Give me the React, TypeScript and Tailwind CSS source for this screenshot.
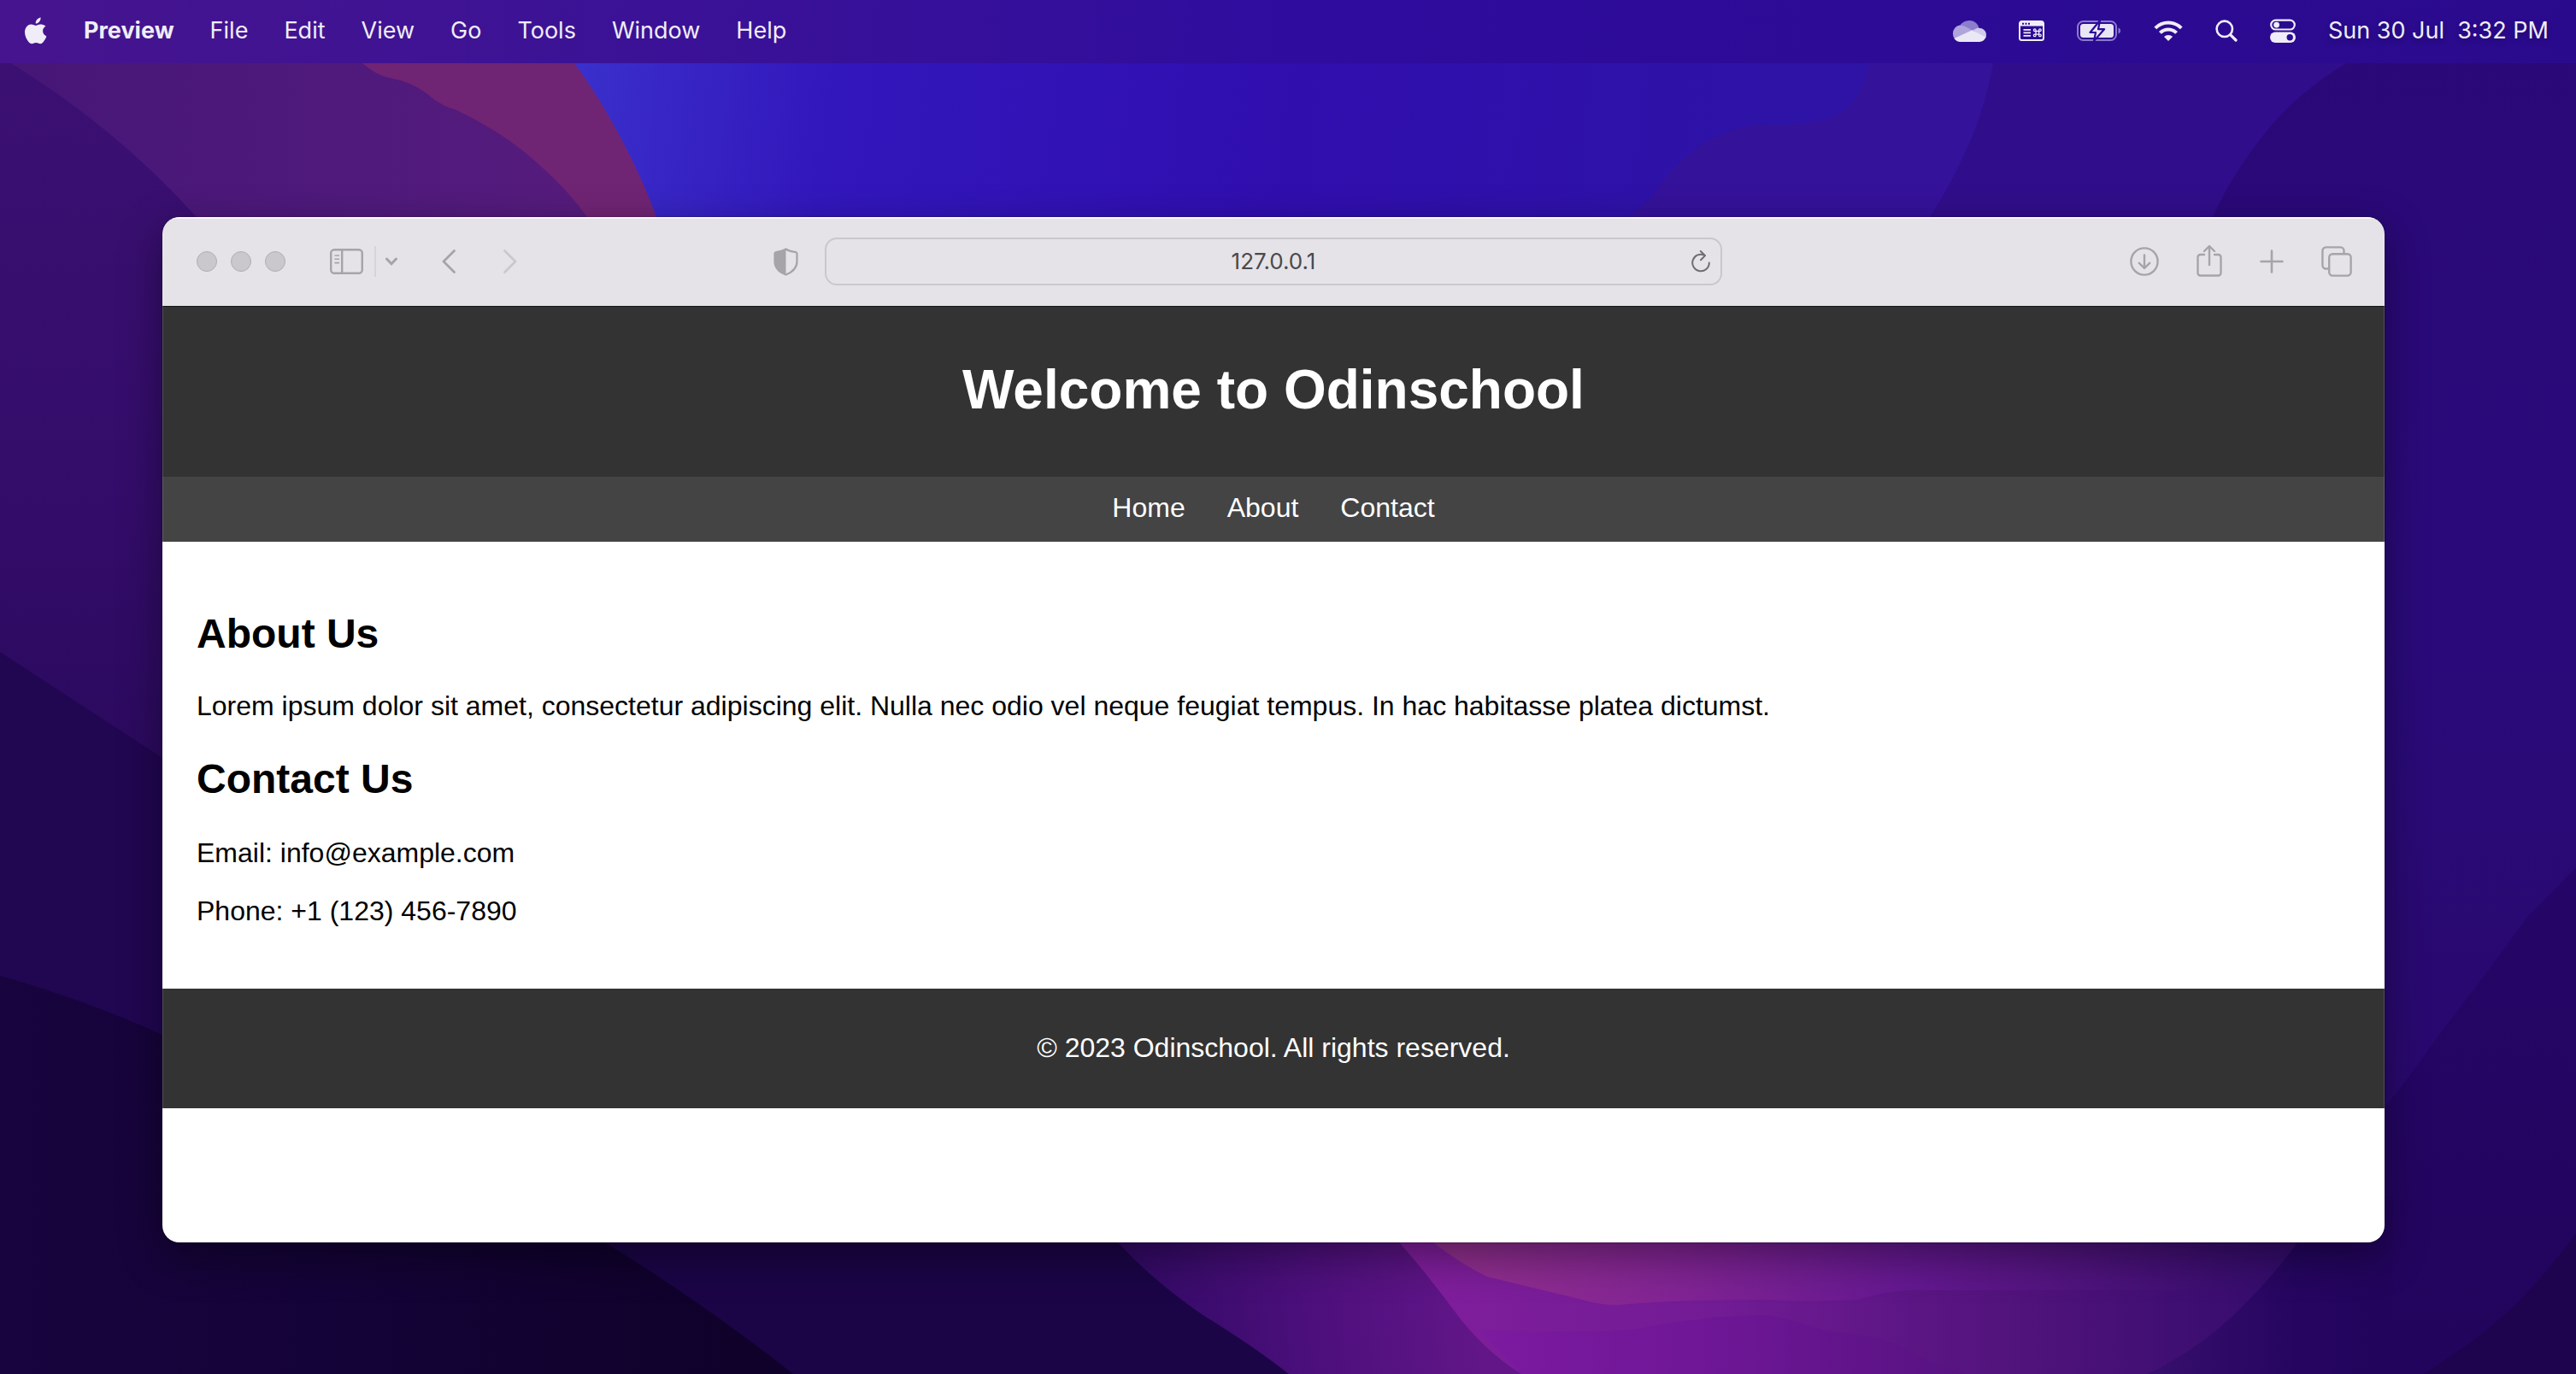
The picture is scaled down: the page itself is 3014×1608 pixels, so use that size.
import React from "react";

const menus = ["File", "Edit", "View", "Go", "Tools", "Window", "Help"];

function Wallpaper() {
  return (
    <svg
      className="absolute inset-0 h-full w-full"
      viewBox="0 0 3014 1608"
      preserveAspectRatio="none"
      aria-hidden="true"
    >
      <defs>
        <linearGradient id="left" x1="0" y1="0" x2="0" y2="1">
          <stop offset="0.05" stopColor="#3b1073" />
          <stop offset="0.5" stopColor="#330c69" />
          <stop offset="0.75" stopColor="#2b0a5e" />
          <stop offset="1" stopColor="#260957" />
        </linearGradient>
        <linearGradient id="purple" x1="0" y1="0" x2="1" y2="0">
          <stop offset="0" stopColor="#451676" />
          <stop offset="0.55" stopColor="#4f1a7c" />
          <stop offset="1" stopColor="#581c7c" />
        </linearGradient>
        <linearGradient id="blue" gradientUnits="userSpaceOnUse" x1="670" y1="100" x2="2340" y2="300">
          <stop offset="0" stopColor="#3a30cc" />
          <stop offset="0.08" stopColor="#3724c4" />
          <stop offset="0.18" stopColor="#3217bc" />
          <stop offset="0.5" stopColor="#300eae" />
          <stop offset="0.75" stopColor="#2e12a8" />
          <stop offset="1" stopColor="#2e14a4" />
        </linearGradient>
        <linearGradient id="right" x1="0" y1="0" x2="0" y2="1">
          <stop offset="0" stopColor="#2a0878" />
          <stop offset="0.5" stopColor="#2a0a7a" />
          <stop offset="1" stopColor="#280868" />
        </linearGradient>
        <linearGradient id="rightLow" x1="0" y1="0" x2="0" y2="1">
          <stop offset="0" stopColor="#250668" />
          <stop offset="1" stopColor="#22045c" />
        </linearGradient>
        <linearGradient id="black" gradientUnits="userSpaceOnUse" x1="0" y1="0" x2="900" y2="0">
          <stop offset="0" stopColor="#18043e" />
          <stop offset="0.4" stopColor="#140338" />
          <stop offset="1" stopColor="#0f0129" />
        </linearGradient>
        <linearGradient id="plum" gradientUnits="userSpaceOnUse" x1="1340" y1="1560" x2="1720" y2="1500">
          <stop offset="0" stopColor="#330a66" />
          <stop offset="0.5" stopColor="#4c0f7c" />
          <stop offset="1" stopColor="#621688" />
        </linearGradient>
        <linearGradient id="violet" gradientUnits="userSpaceOnUse" x1="1660" y1="0" x2="2680" y2="0">
          <stop offset="0" stopColor="#801e9c" />
          <stop offset="0.35" stopColor="#711b94" />
          <stop offset="0.65" stopColor="#54147e" />
          <stop offset="1" stopColor="#340c6c" />
        </linearGradient>
        <linearGradient id="pink" gradientUnits="userSpaceOnUse" x1="1680" y1="0" x2="2600" y2="0">
          <stop offset="0" stopColor="#93308e" />
          <stop offset="0.3" stopColor="#822494" />
          <stop offset="0.6" stopColor="#641890" />
          <stop offset="1" stopColor="#4a137a" stopOpacity="0" />
        </linearGradient>
        <linearGradient id="deep" gradientUnits="userSpaceOnUse" x1="1740" y1="0" x2="2330" y2="0">
          <stop offset="0" stopColor="#7c1aa0" />
          <stop offset="0.5" stopColor="#6c1694" />
          <stop offset="1" stopColor="#54127e" />
        </linearGradient>
        <linearGradient id="navy" gradientUnits="userSpaceOnUse" x1="2530" y1="0" x2="2790" y2="0">
          <stop offset="0" stopColor="#360e6c" />
          <stop offset="0.6" stopColor="#250560" />
          <stop offset="1" stopColor="#22045c" />
        </linearGradient>
      </defs>
      <rect width="3014" height="1608" fill="#1b0547" />
      <path d="M0 0H700V1200H0Z" fill="url(#left)" />
      <path d="M0 763L190 887L700 1200V1400H0Z" fill="#210651" />
      <path d="M0 1142Q100 1170 190 1211Q480 1330 708 1454Q830 1530 928 1608H0Z" fill="url(#black)" />
      <path d="M-40 40L13 74Q136 150 230 254V500H800V40Z" fill="url(#purple)" />
      <path d="M370 40L424 74Q440 88 455 91Q480 95 500 110Q516 124 532 128Q590 155 631 193Q664 222 687 254V400H900V40Z" fill="#702474" />
      <path d="M640 20L672 74Q704 116 740 188Q756 220 768 254L900 700H2400V20Z" fill="url(#blue)" />
      <path d="M2200 0L2187 74Q2176 138 2118 143Q2100 147 2079 146Q2040 142 1992 168Q1960 190 1938 222Q1922 246 1890 262V400H2400V0Z" fill="#35129a" />
      <path d="M2340 0L2332 74Q2318 160 2258 254V400H2800V0Z" fill="#300e8b" />
      <path d="M2880 0L2745 74Q2688 108 2649 157Q2610 206 2589 254V1500H3014V0Z" fill="url(#right)" />
      <path d="M3014 1015L2957 1073L2913 1133L2847 1220Q2800 1290 2700 1400V1608H3014Z" fill="url(#rightLow)" />
      <path d="M1280 1400L1308 1454Q1350 1500 1409 1540Q1466 1575 1508 1608H2700V1400Z" fill="url(#plum)" />
      <path d="M1600 1410L1637 1454Q1665 1485 1700 1532Q1735 1580 1780 1608H2700V1400Z" fill="url(#violet)" />
      <path d="M1640 1420L1677 1454Q1710 1480 1740 1494L1847 1520Q1880 1530 1905 1526Q1970 1521 2065 1521Q2120 1524 2174 1521Q2215 1508 2251 1510L2600 1510V1420Z" fill="url(#pink)" />
      <path d="M1730 1557Q1860 1560 1912 1556Q1990 1540 2065 1539Q2090 1542 2140 1558Q2200 1562 2225 1576Q2270 1600 2300 1608H1780Z" fill="url(#deep)" />
      <path d="M2730 1400L2688 1454Q2655 1500 2612 1540Q2570 1580 2513 1608H2800V1400Z" fill="url(#navy)" />
      <path d="M3014 1443Q2985 1484 2940 1530Q2896 1570 2836 1608H3014Z" fill="#1e044e" />
    </svg>
  );
}

function AppleLogo() {
  return (
    <svg className="h-[32px] w-[28px]" viewBox="0 0 28 32" fill="currentColor" aria-hidden="true">
      <path d="M19.6.4c.2 1.9-.6 3.7-1.6 5-1.100 1.300-2.700 2.200-4.300 2.100-.2-1.800.7-3.700 1.700-4.800C16.500 1.400 18.200.5 19.600.4zM25.400 10.800c-2 1.200-3.300 3-3.300 5.500 0 2.900 1.700 5 4.300 6.100-.6 1.800-1.500 3.500-2.600 5.100-1.300 1.900-2.600 3.700-4.700 3.700-1.900 0-2.600-1.200-4.900-1.200s-3.100 1.200-5 1.200c-2.100.1-3.700-2-5-3.900C1.600 23.500-.4 16.900 2.300 12.400c1.400-2.300 3.700-3.800 6.300-3.800 2 0 3.900 1.300 5.100 1.300s3.500-1.600 5.900-1.400c1.300.1 3.900.3 5.800 2.300z" />
    </svg>
  );
}

function CloudIcon() {
  return (
    <svg className="h-[26px] w-[40px]" viewBox="0 0 40 26" aria-hidden="true">
      <path d="M9 7.500A11.800 10.500 0 0 1 31.500 9.500L23 13.500z" fill="#8d7dcd" />
      <path d="M9 26A9 9.800 0 0 1 9 6.500c5 .3 9.500 2.800 15 6.500L5 24z" fill="#b0a4dc" />
      <path d="M24 12.500l5-2.600c5.500-1.300 11 2.200 11 8q0 2-1 4z" fill="#d2caec" />
      <path d="M2.500 22 23.500 12.300 39.300 20.500A8.300 8.300 0 0 1 32 26H9a8.500 8.500 0 0 1-6.500-4z" fill="#ebe8f6" />
    </svg>
  );
}

function ShortcutIcon() {
  return (
    <svg className="h-[24px] w-[30px]" viewBox="0 0 30 24" fill="none" stroke="currentColor" aria-hidden="true">
      <path d="M1 6V3.500A2.500 2.500 0 0 1 3.500 1h23A2.500 2.500 0 0 1 29 3.500V20.500A2.500 2.500 0 0 1 26.500 23h-23A2.500 2.500 0 0 1 1 20.500z" strokeWidth="2" />
      <path d="M1 1.500H29V6.500H1z" fill="currentColor" stroke="none" />
      <path d="M4 3.800h2M7.500 3.800h2M11 3.800h2" stroke="#2b0a96" strokeWidth="2" />
      <path d="M5.500 10.800h8.500M5.500 14.300h8.500M5.500 17.800h8.500" strokeWidth="1.800" />
      <path d="M20 12.500h3.600v3.600h-3.600zM20 12.500h-1.300a1.300 1.300 0 1 1 1.300-1.300zM23.600 12.500h1.300a1.300 1.300 0 1 0-1.300-1.300zM20 16.100h-1.300a1.300 1.300 0 1 0 1.300 1.300zM23.600 16.100h1.300a1.300 1.300 0 1 1-1.300 1.300z" strokeWidth="1.300" />
    </svg>
  );
}

function BatteryIcon() {
  return (
    <svg className="h-[26px] w-[52px]" viewBox="0 0 52 26" aria-hidden="true">
      <rect x="1" y="2" width="45" height="22" rx="6.500" fill="none" stroke="#8b79cf" strokeWidth="2" />
      <path d="M48.500 9.500c1.600.6 2.500 1.900 2.500 3.500s-.9 2.900-2.500 3.500z" fill="#8b79cf" />
      <rect x="4" y="5" width="39" height="16" rx="3.500" fill="#e9e6f5" />
      <path d="M27 1 15.500 15H22l-2 10L32 11.200H25z" fill="#e9e6f5" stroke="#2b0a98" strokeWidth="2.200" strokeLinejoin="round" />
    </svg>
  );
}

function WifiIcon() {
  return (
    <svg className="h-[26px] w-[34px]" viewBox="0 0 34 26" fill="none" stroke="currentColor" strokeWidth="4" aria-hidden="true">
      <path d="M1.800 9.800a21.500 21.500 0 0 1 30.400 0" />
      <path d="M7.400 15.400a13.600 13.600 0 0 1 19.200 0" />
      <path d="M12 20a7 7 0 0 1 10 0l-5 5z" fill="currentColor" stroke="none" />
    </svg>
  );
}

function SearchIcon() {
  return (
    <svg className="h-[26px] w-[26px]" viewBox="0 0 26 26" fill="none" stroke="currentColor" strokeLinecap="round" aria-hidden="true">
      <circle cx="10.800" cy="10.800" r="9.200" strokeWidth="2.600" />
      <path d="M17.800 17.800 24 24" strokeWidth="3.200" />
    </svg>
  );
}

function ControlCenterIcon() {
  return (
    <svg className="h-[28px] w-[30px]" viewBox="0 0 30 28" aria-hidden="true">
      <rect x="1.200" y="1.700" width="27.600" height="10.800" rx="5.400" fill="none" stroke="currentColor" strokeWidth="2.200" />
      <circle cx="7.600" cy="7.100" r="3.400" fill="currentColor" />
      <rect x="0" y="15.500" width="30" height="12.500" rx="6.200" fill="currentColor" />
      <circle cx="23.200" cy="21.700" r="3.700" fill="#2a0994" />
    </svg>
  );
}

function MenuBar() {
  return (
    <header className="flex h-[74px] items-center justify-between bg-linear-to-r from-[#46148e] via-[#2f0c9e] to-[#2a0a8c] pr-8 pb-[2px] pl-7 text-[#f0edf8]">
      <nav aria-label="Menu bar" className="flex items-center gap-[42px] text-[27px] leading-[36px] [text-shadow:0_3px_6px_rgb(0_0_0/0.25)]">
        <button type="button" aria-label="Apple menu"><AppleLogo /></button>
        <button type="button" className="font-bold">Preview</button>
        {menus.map((m) => (
          <button type="button" key={m}>{m}</button>
        ))}
      </nav>
      <div className="flex items-center gap-[38px] text-[27px] leading-[36px] [text-shadow:0_3px_6px_rgb(0_0_0/0.25)]">
        <button type="button" aria-label="Cloud storage"><CloudIcon /></button>
        <button type="button" aria-label="Shortcuts"><ShortcutIcon /></button>
        <button type="button" aria-label="Battery"><BatteryIcon /></button>
        <button type="button" aria-label="Wi-Fi"><WifiIcon /></button>
        <button type="button" aria-label="Search"><SearchIcon /></button>
        <button type="button" aria-label="Control Center"><ControlCenterIcon /></button>
        <time className="whitespace-pre">Sun 30 Jul  3:32 PM</time>
      </div>
    </header>
  );
}

function TrafficLight({ label }: { label: string }) {
  return <button type="button" aria-label={label} className="size-6 rounded-full border border-[#b0aeb3] bg-[#cac8cd]" />;
}

function Toolbar() {
  return (
    <div className="grid h-[105px] grid-cols-[1fr_minmax(0,1050px)_1fr] items-center border-b border-[#161616] bg-[#e5e3e8] text-[#a6a4a9] shadow-[inset_0_2px_0_#f6f5f8]">
      <div className="flex items-center justify-between pr-[31px] pl-10">
        <div className="flex items-center">
          <div className="flex gap-4">
            <TrafficLight label="Close" />
            <TrafficLight label="Minimize" />
            <TrafficLight label="Zoom" />
          </div>
          <button type="button" aria-label="Show sidebar" className="ml-[52px]">
            <svg className="h-[30px] w-[39px]" viewBox="0 0 39 30" fill="none" stroke="currentColor" strokeWidth="2.400" strokeLinecap="round">
              <rect x="1.200" y="1.200" width="36.600" height="27.600" rx="4" />
              <path d="M14.200 1.500v27" />
              <path d="M6 8h4.500M6 12.300h4.500M6 16.600h4.500" strokeWidth="1.600" />
            </svg>
          </button>
          <span className="ml-[13px] h-9 w-[2px] bg-[#d6d4d9]" />
          <button type="button" aria-label="Tab groups" className="ml-[11px]">
            <svg className="h-[10px] w-[14px]" viewBox="0 0 14 10" fill="none" stroke="currentColor" strokeWidth="3" strokeLinecap="round" strokeLinejoin="round">
              <path d="m1.500 2 5.500 5.800L12.500 2" />
            </svg>
          </button>
          <button type="button" aria-label="Back" className="ml-[52px]">
            <svg className="h-[28px] w-[16px]" viewBox="0 0 16 28" fill="none" stroke="currentColor" strokeWidth="2.800" strokeLinecap="round" strokeLinejoin="round">
              <path d="M14.500 1.500 2 14l12.500 12.500" />
            </svg>
          </button>
          <button type="button" aria-label="Forward" className="ml-14 text-[#cac8cd]">
            <svg className="h-[28px] w-[16px]" viewBox="0 0 16 28" fill="none" stroke="currentColor" strokeWidth="2.800" strokeLinecap="round" strokeLinejoin="round">
              <path d="M1.500 1.500 14 14 1.500 26.500" />
            </svg>
          </button>
        </div>
        <button type="button" aria-label="Privacy report">
          <svg className="h-[33px] w-[29px]" viewBox="0 0 29 33">
            <path d="M14.500 1.500C18 4 22.500 4.600 26.500 5.200c.8.200 1 .8 1 1.600V16c0 8-5.500 12.500-13 15.500C7 28.500 1.500 24 1.500 16V6.800c0-.8.200-1.400 1-1.600 4-.6 8.500-1.200 12-3.700z" fill="none" stroke="currentColor" strokeWidth="2.200" />
            <path d="M14.500 1.500v30C7 28.500 1.500 24 1.500 16V6.800c0-.8.200-1.400 1-1.600 4-.6 8.500-1.200 12-3.700z" fill="currentColor" />
          </svg>
        </button>
      </div>
      <div className="flex h-14 items-center rounded-[14px] border-2 border-[#cac8cd] pr-3 pl-[34px]">
        <input
          type="text"
          aria-label="Address"
          defaultValue="127.0.0.1"
          className="min-w-0 flex-1 bg-transparent text-center text-[26px] leading-[36px] text-[#4a494c] outline-none"
        />
        <button type="button" aria-label="Reload" className="text-[#6f6d72]">
          <svg className="h-[26px] w-[22px]" viewBox="0 0 22 26" fill="none" stroke="currentColor" strokeWidth="2" strokeLinecap="round" strokeLinejoin="round">
            <path d="M20.800 14.500A9.800 9.800 0 1 1 15.500 5.800" />
            <path d="M10.800 1 16 6.100l-5 5.100" />
          </svg>
        </button>
      </div>
      <div className="flex items-center justify-end gap-[44px] pr-[38px]">
        <button type="button" aria-label="Downloads">
          <svg className="h-[34px] w-[34px]" viewBox="0 0 34 34" fill="none" stroke="currentColor" strokeWidth="2.400" strokeLinecap="round" strokeLinejoin="round">
            <circle cx="17" cy="17" r="15.600" />
            <path d="M17 9.500v15M10.800 18.800l6.200 6 6.200-6" />
          </svg>
        </button>
        <button type="button" aria-label="Share">
          <svg className="h-[40px] w-[30px]" viewBox="0 0 30 40" fill="none" stroke="currentColor" strokeWidth="2.400" strokeLinecap="round" strokeLinejoin="round">
            <path d="M9 12H4.500A3 3 0 0 0 1.500 15v18.500a3 3 0 0 0 3 3h21a3 3 0 0 0 3-3V15a3 3 0 0 0-3-3H21" />
            <path d="M15 24V2.500M9 8l6-6 6 6" />
          </svg>
        </button>
        <button type="button" aria-label="New tab">
          <svg className="h-[28px] w-[28px]" viewBox="0 0 28 28" fill="none" stroke="currentColor" strokeWidth="2.600" strokeLinecap="round">
            <path d="M14 1.500v25M1.500 14h25" />
          </svg>
        </button>
        <button type="button" aria-label="Tab overview">
          <svg className="h-[36px] w-[36px]" viewBox="0 0 36 36" fill="none" stroke="currentColor" strokeWidth="2.400">
            <rect x="9.200" y="9.200" width="25.400" height="25.400" rx="4" />
            <path d="M9 26.500H5.400a4 4 0 0 1-4-4V5.400a4 4 0 0 1 4-4H22.500a4 4 0 0 1 4 4V9" />
          </svg>
        </button>
      </div>
    </div>
  );
}

function Site() {
  return (
    <div className="flex flex-1 flex-col bg-white font-['Liberation_Sans',Arial,sans-serif] text-[32px] leading-[36px] text-black">
      <header className="bg-[#333] pt-[60px] pb-[65px] text-center text-white">
        <h1 className="text-[64px] leading-[74px] font-bold">Welcome to Odinschool</h1>
      </header>
      <nav aria-label="Site" className="flex justify-center gap-[49px] bg-[#444] pt-[18px] pb-[22px] text-white">
        <a href="#home">Home</a>
        <a href="#about">About</a>
        <a href="#contact">Contact</a>
      </nav>
      <main className="flex flex-col px-10 pt-20 pb-[73px]">
        <section id="about">
          <h2 className="text-[48px] leading-[56px] font-bold">About Us</h2>
          <p className="mt-[38px] mb-10">
            Lorem ipsum dolor sit amet, consectetur adipiscing elit. Nulla nec odio vel neque feugiat tempus. In hac habitasse platea dictumst.
          </p>
        </section>
        <section id="contact">
          <h2 className="text-[48px] leading-[56px] font-bold">Contact Us</h2>
          <p className="mt-10">Email: info@example.com</p>
          <p className="mt-8">Phone: +1 (123) 456-7890</p>
        </section>
      </main>
      <footer className="bg-[#333] pt-[51px] pb-[53px] text-center text-white">
        <p>© 2023 Odinschool. All rights reserved.</p>
      </footer>
    </div>
  );
}

export default function App() {
  return (
    <div className="relative isolate min-h-screen overflow-hidden bg-[#1b0547] font-[Inter,sans-serif]">
      <Wallpaper />
      <div className="relative flex min-h-screen flex-col">
        <MenuBar />
        <div className="flex flex-1 flex-col pt-[180px] pr-[224px] pb-[154px] pl-[190px]">
          <div className="relative flex flex-1 flex-col overflow-hidden rounded-[20px] shadow-[0_0_2px_rgb(0_0_0/0.6),0_16px_50px_rgb(0_0_0/0.4)] after:pointer-events-none after:absolute after:inset-0 after:rounded-[20px] after:border after:border-white/15">
            <Toolbar />
            <Site />
          </div>
        </div>
      </div>
    </div>
  );
}
